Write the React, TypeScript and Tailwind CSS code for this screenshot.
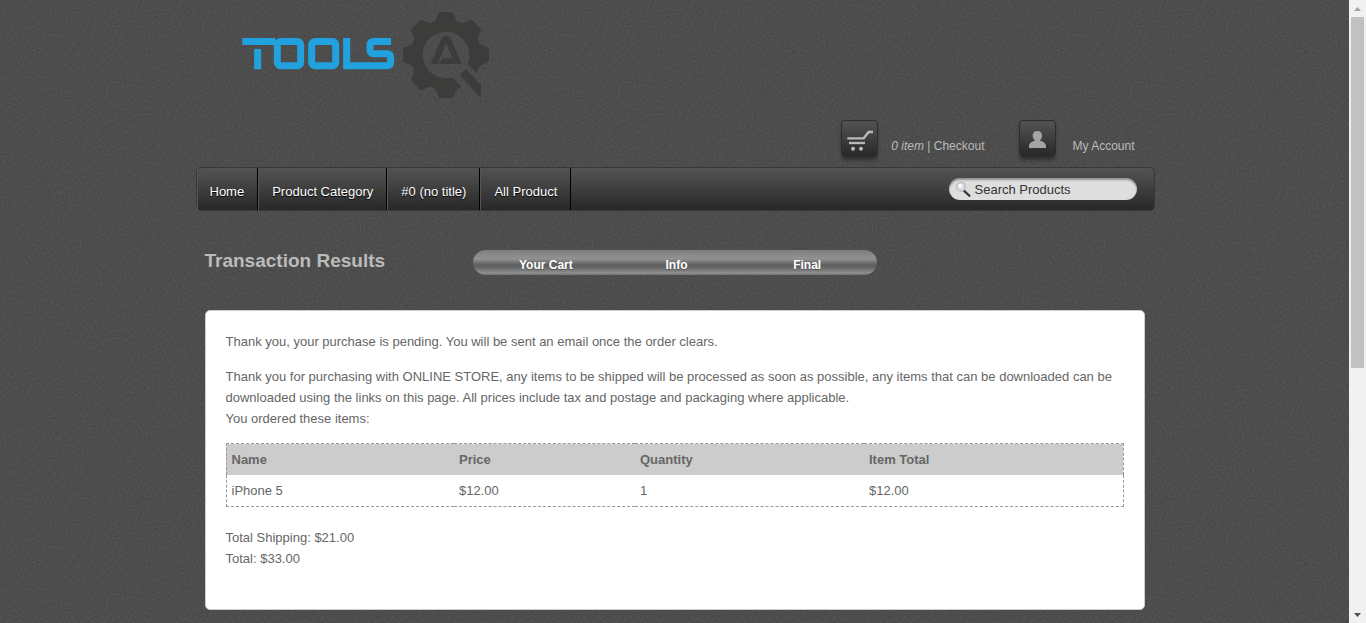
import React from "react";

const teeth = [0, 45, 90, 180, 225, 270, 315];
const navItems = ["Home", "Product Category", "#0 (no title)", "All Product"];
const steps = ["Your Cart", "Info", "Final"];
const orderItems = [{ name: "iPhone 5", price: "$12.00", quantity: 1, total: "$12.00" }];

function Logo() {
  return (
    <svg viewBox="0 0 840 330" width="280" height="110" role="img" aria-label="Tools QA">
      <g fill="none" stroke="#21a2de" strokeWidth="21">
        <path d="M37 124.500H136M83 147V208" />
        <rect x="142" y="124.500" width="70" height="73" rx="10" />
        <rect x="245" y="124.500" width="72" height="73" rx="10" />
        <path d="M483 124.500H432Q420 124.500 420 136V150Q420 161 432 161H470Q482 161 482 173V186Q482 197.500 470 197.500H350V114" />
      </g>
      <mask id="gear-mask">
        <rect width="840" height="330" fill="#fff" />
        <circle cx="648" cy="165" r="70" fill="#000" />
        <path d="M700 179L741 219L800 300V330H665L697 262L664 231Z" fill="#000" />
      </mask>
      <g fill="#3c3c3a">
        <g mask="url(#gear-mask)">
          <circle cx="648" cy="165" r="106" />
          {teeth.map((angle) => (
            <path
              key={angle}
              transform={`rotate(${angle} 648 165)`}
              d="M608 76Q621 55 624 42Q626 36 634 36H662Q670 36 672 42Q675 55 688 76Z"
            />
          ))}
        </g>
        <path d="M690 227L707 207L753 254V294Z" />
        <path d="M602 192L634 116Q638 107 648 107Q658 107 662 116L695 192H626L638 174H668L648 130L622 192Z" />
      </g>
    </svg>
  );
}

function Tile({ children }: { children: React.ReactNode }) {
  return (
    <span className="block size-[37px] rounded-[4px] border border-[#2d2d2d] bg-linear-to-b from-[#535353] via-[#3e3e3e] to-[#282828] shadow-[0_4px_4px_-1px_rgba(0,0,0,0.4)]">
      {children}
    </span>
  );
}

function CartIcon() {
  return (
    <svg viewBox="3 3 105 105" className="size-full" aria-hidden="true">
      <g fill="none" stroke="#b9b9b9" strokeWidth="7">
        <path d="M19 55H68L83 36H96" />
        <path d="M24 69H72" />
      </g>
      <circle cx="36" cy="86" r="6" fill="#b9b9b9" />
      <circle cx="60" cy="86" r="6" fill="#b9b9b9" />
    </svg>
  );
}

function UserIcon() {
  return (
    <svg viewBox="3 3 105 105" className="size-full" aria-hidden="true">
      <path
        fill="#a5a5a5"
        d="M55 33C64 33 69 39 69 47C69 54 65 59 62 62C74 64 81 70 81 79V84H30V79C30 70 37 64 49 62C45 59 41 54 41 47C41 39 46 33 55 33Z"
      />
    </svg>
  );
}

function SearchIcon() {
  return (
    <svg viewBox="0 0 48 48" width="16" height="16" aria-hidden="true" className="shrink-0">
      <path d="M27 29L43 44" stroke="#333" strokeWidth="7" strokeLinecap="round" />
      <path d="M30 28L44 41" stroke="#999" strokeWidth="2" />
      <circle cx="18" cy="17" r="13" fill="#ddd" stroke="#bbb" strokeWidth="4" />
      <circle cx="16" cy="14" r="6" fill="#fff" />
    </svg>
  );
}

function Grain() {
  return (
    <svg className="pointer-events-none absolute inset-0 size-full" aria-hidden="true">
      <filter id="grain" x="0" y="0" width="100%" height="100%" colorInterpolationFilters="sRGB">
        <feTurbulence type="fractalNoise" baseFrequency="0.5" numOctaves="2" seed="4" />
        <feColorMatrix values="0.06 0.06 0 0 0.242  0.06 0.06 0 0 0.242  0.06 0.06 0 0 0.242  0 0 0 0 1" />
      </filter>
      <rect width="100%" height="100%" filter="url(#grain)" />
    </svg>
  );
}

function ScrollBar() {
  return (
    <div aria-hidden="true" className="flex w-[17px] shrink-0 flex-col items-center bg-[#f1f1f1]">
      <div className="flex h-[17px] items-center">
        <svg width="7" height="4" viewBox="0 0 7 4">
          <path d="M0 4L3.500 0L7 4Z" fill="#a3a3a3" />
        </svg>
      </div>
      <div className="h-[351px] w-[13px] bg-[#c1c1c1]" />
      <div className="mt-auto flex h-[17px] items-center">
        <svg width="7" height="4" viewBox="0 0 7 4">
          <path d="M0 0L3.500 4L7 0Z" fill="#505050" />
        </svg>
      </div>
    </div>
  );
}

export default function App() {
  return (
    <div className="flex h-screen overflow-hidden font-['Liberation_Sans',Arial,sans-serif] text-[13px] leading-[21px]">
      <div className="relative min-w-0 flex-1 bg-[#4d4d4d]">
        <Grain />
        <div className="relative mx-auto max-w-[960px]">
          <header>
            <a href="#" className="ml-[35px] block w-fit">
              <Logo />
            </a>
            <div className="flex h-[57px] items-start justify-end gap-[35px] pt-[10px] pr-5 text-[12px] leading-[18px] text-[#bbb]">
              <div className="flex gap-[13px]">
                <Tile>
                  <CartIcon />
                </Tile>
                <p className="pt-[17px]">
                  <a href="#cart">
                    <em>0 item</em>
                  </a>{" "}
                  | <a href="#checkout">Checkout</a>
                </p>
              </div>
              <a href="#account" className="flex gap-4">
                <Tile>
                  <UserIcon />
                </Tile>
                <span className="pt-[17px]">My Account</span>
              </a>
            </div>
            <div className="ml-px flex h-[44px] items-stretch justify-between rounded-[5px] border border-[#383838] bg-linear-to-b from-[#535353] via-[#3e3e3e] to-[#282828] pr-[17px]">
              <nav className="flex">
                {navItems.map((item) => (
                  <a
                    key={item}
                    href="#"
                    className="flex items-center border-r border-l border-r-black border-l-[#555] px-[13px] pt-[5px] text-white [text-shadow:0_1px_1px_#000] first:pl-3"
                  >
                    {item}
                  </a>
                ))}
              </nav>
              <form className="flex h-[22px] w-[188px] items-center gap-1 self-center rounded-full bg-[#dedede] pl-[6px] shadow-[inset_0_2px_2px_rgba(0,0,0,0.35)]">
                <SearchIcon />
                <input
                  type="text"
                  aria-label="Search Products"
                  defaultValue="Search Products"
                  className="w-full min-w-0 bg-transparent text-[13px] text-[#333] outline-none"
                />
              </form>
            </div>
          </header>

          <main className="px-[10px]">
            <div className="flex items-start pt-[39px] pb-[35px]">
              <h1 className="w-[268px] text-[19px] leading-[21px] font-bold text-[#bbb]">Transaction Results</h1>
              <ol className="flex h-[25px] w-[404px] rounded-full bg-[linear-gradient(#7c7c7c,#929292_35%,#5e5e5e_60%,#666_70%,#8c8c8c_90%,#777)] pt-[5px] pr-1 pl-2 text-center text-[12px] font-bold text-white [text-shadow:0_1px_1px_#555]">
                {steps.map((step) => (
                  <li key={step} className="flex-1">
                    {step}
                  </li>
                ))}
              </ol>
            </div>

            <section className="rounded-[5px] border border-[#ccc] bg-white px-5 pt-5 pb-10 text-[#666]">
              <p>Thank you, your purchase is pending. You will be sent an email once the order clears.</p>
              <p className="mt-[14px]">
                Thank you for purchasing with ONLINE STORE, any items to be shipped will be processed as soon as
                possible, any items that can be downloaded can be downloaded using the links on this page. All prices
                include tax and postage and packaging where applicable.
                <br />
                You ordered these items:
              </p>
              <table className="mt-[14px] w-full table-fixed border-collapse border border-dashed border-[#999] text-left">
                <colgroup>
                  <col className="w-[228px]" />
                  <col className="w-[181px]" />
                  <col className="w-[229px]" />
                  <col />
                </colgroup>
                <thead className="bg-[#ccc]">
                  <tr>
                    {["Name", "Price", "Quantity", "Item Total"].map((label) => (
                      <th key={label} scope="col" className="p-[5px] font-bold">
                        {label}
                      </th>
                    ))}
                  </tr>
                </thead>
                <tbody>
                  {orderItems.map((item) => (
                    <tr key={item.name}>
                      <td className="p-[5px]">{item.name}</td>
                      <td className="p-[5px]">{item.price}</td>
                      <td className="p-[5px]">{item.quantity}</td>
                      <td className="p-[5px]">{item.total}</td>
                    </tr>
                  ))}
                </tbody>
              </table>
              <p className="mt-5">
                Total Shipping: $21.00
                <br />
                Total: $33.00
              </p>
            </section>
          </main>
        </div>
      </div>
      <ScrollBar />
    </div>
  );
}
